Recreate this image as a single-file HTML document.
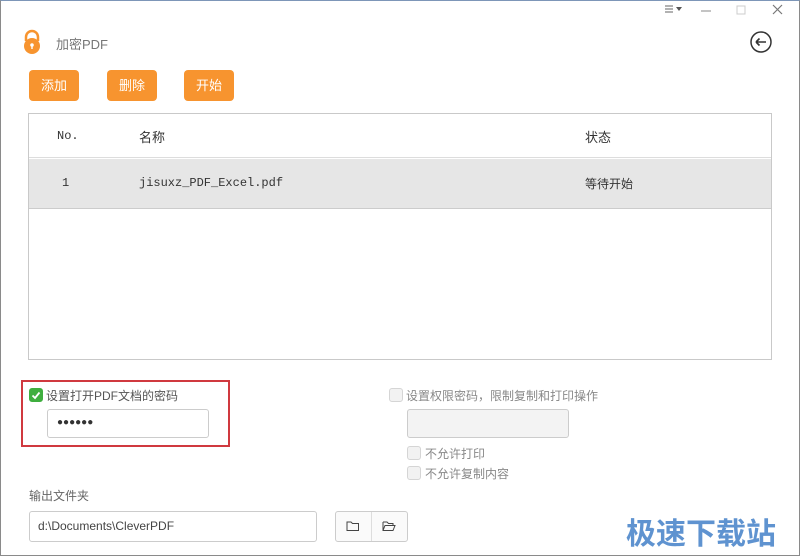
<!DOCTYPE html>
<html><head><meta charset="utf-8"><style>
*{margin:0;padding:0;box-sizing:border-box}
body{width:800px;height:556px;background:#fff;font-family:"Liberation Sans","Noto Sans CJK SC",sans-serif;position:relative;overflow:hidden;color:#555}
.win{position:absolute;left:0;top:0;width:800px;height:556px;border:1px solid #8a8a8a;border-top-color:#7d96b8}
.abs{position:absolute}
.btn{position:absolute;top:70px;width:50px;height:31px;background:#f7942f;border-radius:4px;color:#fff;font-size:13px;text-align:center;line-height:31px}
.tbl{position:absolute;left:28px;top:113px;width:744px;height:247px;border:1px solid #c9c9c9}
.hdr{position:absolute;left:0;top:0;width:100%;height:44px;border-bottom:1px solid #ddd;font-size:13px;color:#333}
.row{position:absolute;left:0;top:45px;width:100%;height:50px;background:#e6e6e6;border-bottom:1px solid #ccc;font-size:12px;color:#333}
.mono{font-family:"Liberation Mono","Noto Sans CJK SC",monospace}
.cb{position:absolute;width:14px;height:14px;border-radius:3px;border:1px solid #d5d5d5;background:#f2f2f2}
.inp{position:absolute;border:1px solid #ccc;border-radius:3px;background:#fff}
.lbl{position:absolute;font-size:12px;color:#555;white-space:nowrap}
</style></head><body>
<div class="win"></div>
<svg class="abs" style="left:660px;top:3px" width="130" height="14">
<g stroke="#666" stroke-width="1"><line x1="5" y1="3" x2="13" y2="3"/><line x1="5" y1="6" x2="13" y2="6"/><line x1="5" y1="9" x2="13" y2="9"/></g>
<polygon points="16,4 22,4 19,8" fill="#555"/>
<line x1="41" y1="8" x2="51" y2="8" stroke="#888"/>
<rect x="77" y="3" width="8" height="8" fill="none" stroke="#ccc"/>
<path d="M113 2 L122 11 M122 2 L113 11" stroke="#777" stroke-width="1.2"/>
</svg>
<svg class="abs" style="left:749px;top:30px" width="24" height="24"><circle cx="12" cy="12" r="10" fill="none" stroke="#333" stroke-width="1.5"/><path d="M7 12 H17 M7 12 L10.5 8.5 M7 12 L10.5 15.5" stroke="#333" stroke-width="1.6" fill="none"/></svg>
<svg class="abs" style="left:21px;top:29px" width="22" height="26"><path d="M5 12 V8 a6 6 0 0 1 12 0 V12" fill="none" stroke="#f7942f" stroke-width="2.5"/><circle cx="11" cy="17" r="8" fill="#f7942f"/><circle cx="11" cy="16" r="1.8" fill="#fff"/><rect x="10.3" y="16" width="1.4" height="4" fill="#fff"/></svg>
<div class="lbl" style="left:56px;top:34px;font-size:13px;color:#777">加密PDF</div>
<div class="btn" style="left:29px">添加</div>
<div class="btn" style="left:107px">删除</div>
<div class="btn" style="left:184px">开始</div>
<div class="tbl">
 <div class="hdr"><span class="abs mono" style="left:28px;top:15px;font-size:12px">No.</span><span class="abs" style="left:110px;top:13px">名称</span><span class="abs" style="left:556px;top:13px">状态</span></div>
 <div class="row"><span class="abs mono" style="left:33px;top:17px">1</span><span class="abs mono" style="left:110px;top:17px">jisuxz_PDF_Excel.pdf</span><span class="abs" style="left:556px;top:16px">等待开始</span></div>
</div>
<div class="abs" style="left:21px;top:380px;width:209px;height:67px;border:2px solid #d0393f"></div>
<div class="cb" style="left:29px;top:388px;background:#3fae3f;border-color:#3fae3f"></div>
<svg class="abs" style="left:29px;top:388px" width="14" height="14"><path d="M3.5 7.5 L6 10 L10.5 4.5" stroke="#fff" stroke-width="1.8" fill="none"/></svg>
<div class="lbl" style="left:46px;top:387px">设置打开PDF文档的密码</div>
<div class="inp" style="left:47px;top:409px;width:162px;height:29px"><span class="abs" style="left:9px;top:7px;font-size:10px;color:#333;letter-spacing:0px">●●●●●●</span></div>
<div class="cb" style="left:389px;top:388px"></div>
<div class="lbl" style="left:406px;top:387px;color:#888">设置权限密码，限制复制和打印操作</div>
<div class="inp" style="left:407px;top:409px;width:162px;height:29px;background:#f3f3f3"></div>
<div class="cb" style="left:407px;top:446px"></div>
<div class="lbl" style="left:425px;top:445px;color:#888">不允许打印</div>
<div class="cb" style="left:407px;top:466px"></div>
<div class="lbl" style="left:425px;top:465px;color:#888">不允许复制内容</div>
<div class="lbl" style="left:29px;top:487px;color:#666">输出文件夹</div>
<div class="inp" style="left:29px;top:511px;width:288px;height:31px"><span class="abs" style="left:8px;top:7px;font-size:12px;color:#444">d:\Documents\CleverPDF</span></div>
<div class="inp" style="left:335px;top:511px;width:73px;height:31px;background:#fafafa"><div class="abs" style="left:35px;top:0;width:1px;height:29px;background:#ddd"></div>
<svg class="abs" style="left:10px;top:8px" width="14" height="12"><path d="M1 2 H5 L6.5 3.5 H12.5 V10.5 H1 Z" fill="none" stroke="#444"/></svg>
<svg class="abs" style="left:46px;top:8px" width="14" height="12"><path d="M1 2 H5 L6.5 3.5 H11 V5 M1 2 V10.5 H11 L13 5.5 H3 L1 10.5" fill="none" stroke="#444"/></svg></div>
<div class="abs" style="left:626px;top:509px;font-size:30px;font-weight:bold;color:#5f93d0;letter-spacing:0px;font-family:'Noto Sans CJK SC',sans-serif">极速下载站</div>
</body></html>
